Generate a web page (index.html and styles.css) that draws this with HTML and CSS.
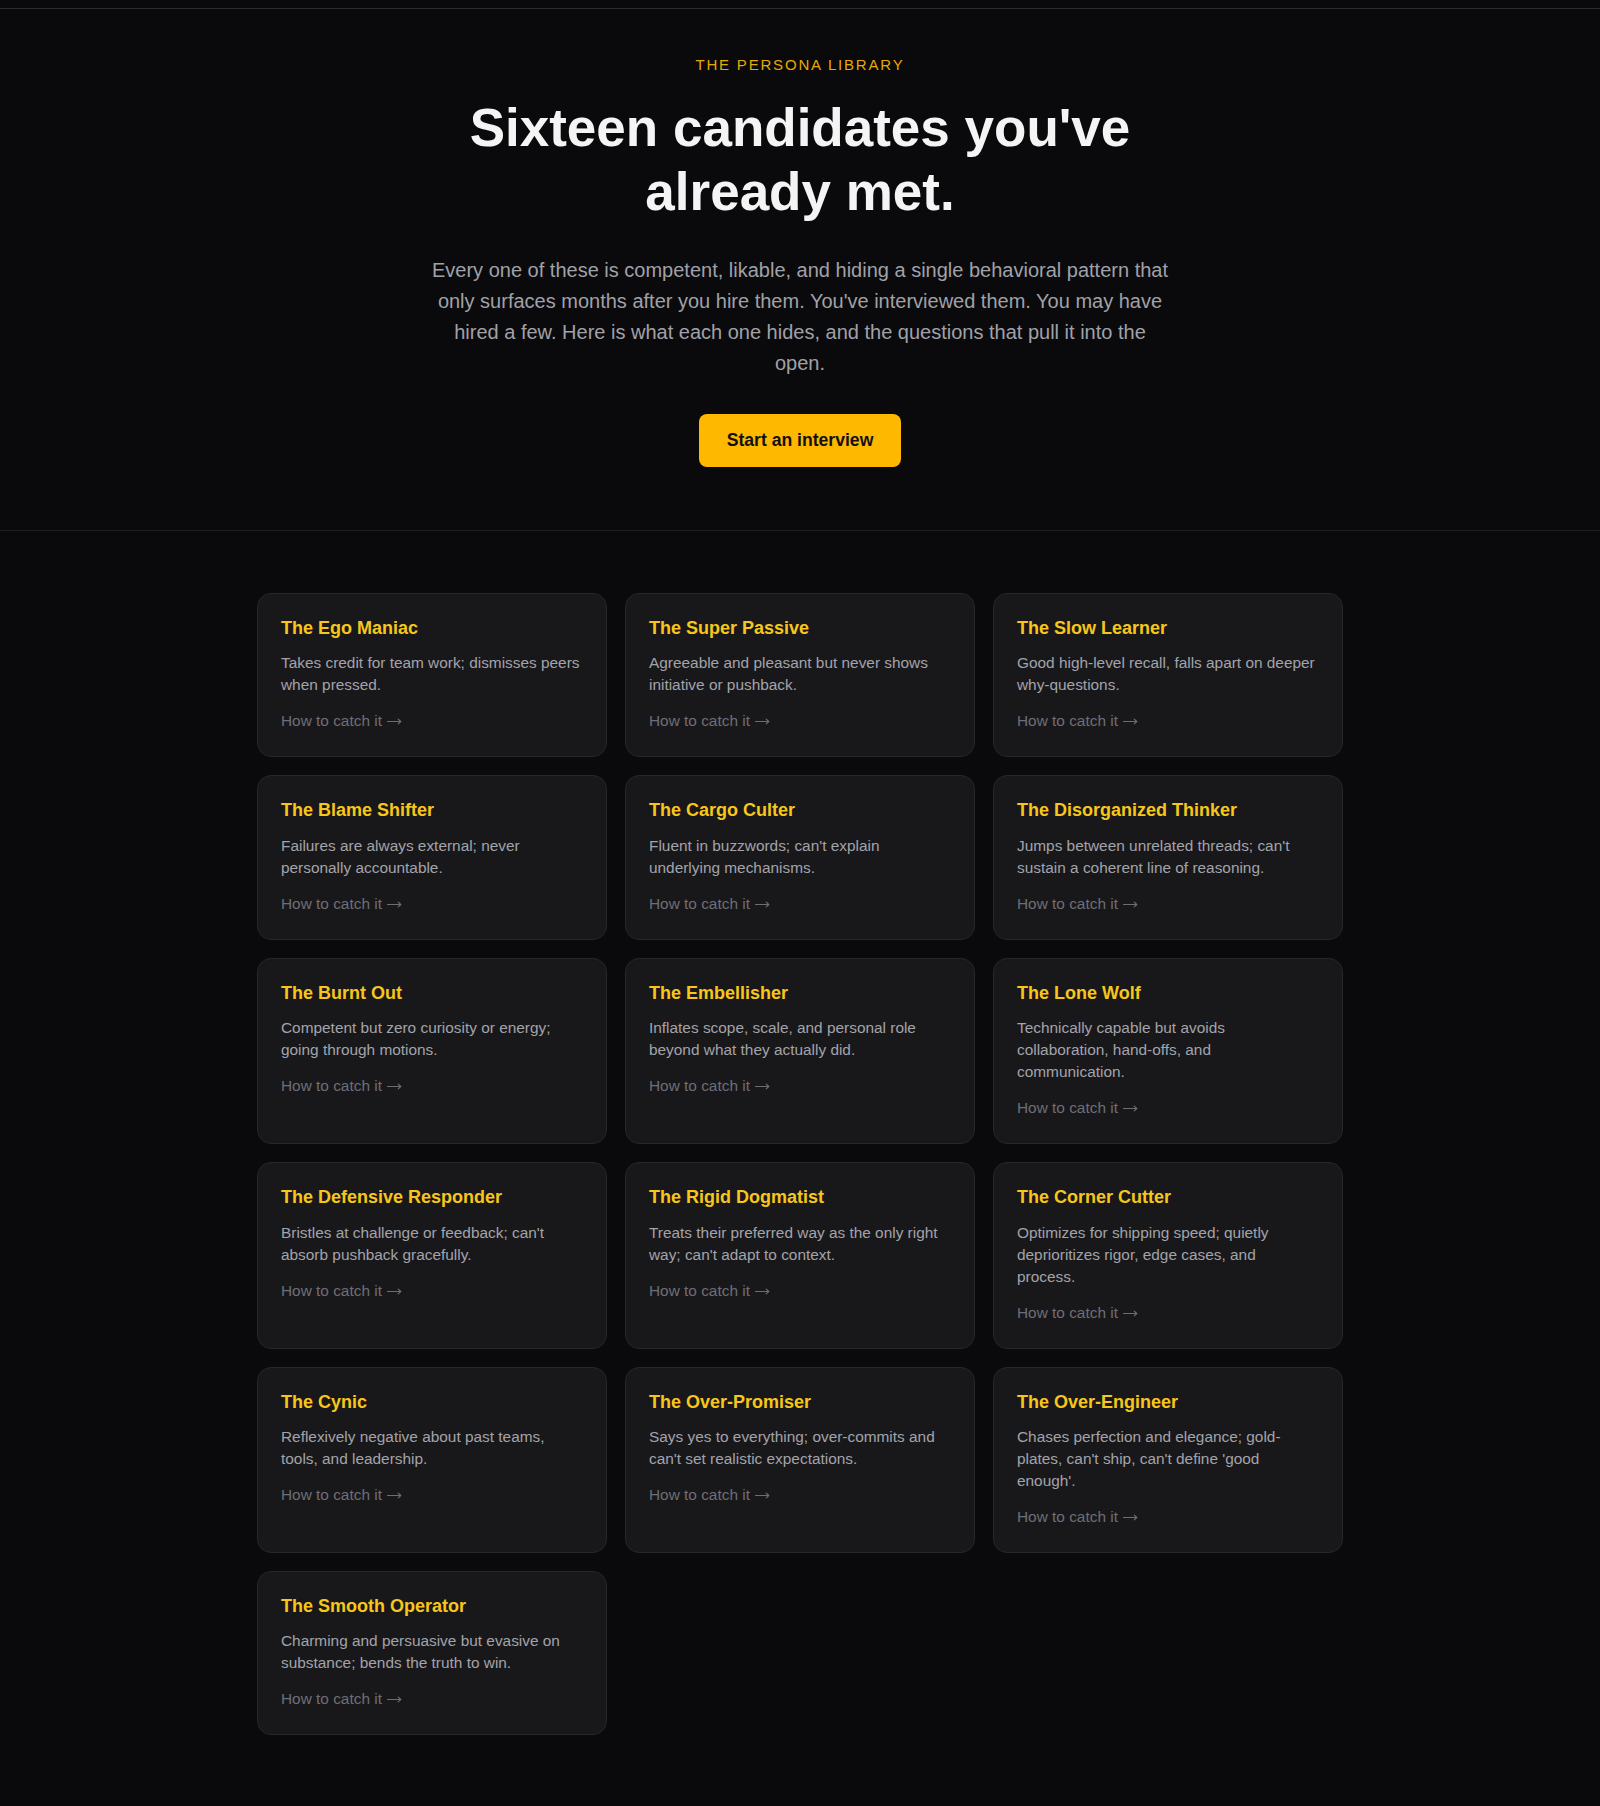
FILE: index.html
```html
<!DOCTYPE html>
<html lang="en">
<head>
<meta charset="utf-8">
<title>The Persona Library</title>
<link rel="stylesheet" href="styles.css">
</head>
<body>
<div class="topbar"></div>
<header class="hero">
  <p class="eyebrow">THE PERSONA LIBRARY</p>
  <h1 class="hero-title">Sixteen candidates you've already met.</h1>
  <p class="hero-lead">Every one of these is competent, likable, and hiding a single behavioral pattern that only surfaces months after you hire them. You've interviewed them. You may have hired a few. Here is what each one hides, and the questions that pull it into the open.</p>
  <a class="btn" href="#">Start an interview</a>
</header>
<main class="library">
  <div class="grid">
    <article class="card"><h2 class="card-title">The Ego Maniac</h2><p class="card-desc">Takes credit for team work; dismisses peers when pressed.</p><a class="card-link" href="#">How to catch it <svg class="arrow" viewBox="0 0 15 10" aria-hidden="true"><path d="M0.5 5.5H13.8M11.2 3.2L13.8 5.5L11.2 7.8"/></svg></a></article>
    <article class="card"><h2 class="card-title">The Super Passive</h2><p class="card-desc">Agreeable and pleasant but never shows initiative or pushback.</p><a class="card-link" href="#">How to catch it <svg class="arrow" viewBox="0 0 15 10" aria-hidden="true"><path d="M0.5 5.5H13.8M11.2 3.2L13.8 5.5L11.2 7.8"/></svg></a></article>
    <article class="card"><h2 class="card-title">The Slow Learner</h2><p class="card-desc">Good high-level recall, falls apart on deeper why-questions.</p><a class="card-link" href="#">How to catch it <svg class="arrow" viewBox="0 0 15 10" aria-hidden="true"><path d="M0.5 5.5H13.8M11.2 3.2L13.8 5.5L11.2 7.8"/></svg></a></article>
    <article class="card"><h2 class="card-title">The Blame Shifter</h2><p class="card-desc">Failures are always external; never personally accountable.</p><a class="card-link" href="#">How to catch it <svg class="arrow" viewBox="0 0 15 10" aria-hidden="true"><path d="M0.5 5.5H13.8M11.2 3.2L13.8 5.5L11.2 7.8"/></svg></a></article>
    <article class="card"><h2 class="card-title">The Cargo Culter</h2><p class="card-desc">Fluent in buzzwords; can't explain underlying mechanisms.</p><a class="card-link" href="#">How to catch it <svg class="arrow" viewBox="0 0 15 10" aria-hidden="true"><path d="M0.5 5.5H13.8M11.2 3.2L13.8 5.5L11.2 7.8"/></svg></a></article>
    <article class="card"><h2 class="card-title">The Disorganized Thinker</h2><p class="card-desc">Jumps between unrelated threads; can't sustain a coherent line of reasoning.</p><a class="card-link" href="#">How to catch it <svg class="arrow" viewBox="0 0 15 10" aria-hidden="true"><path d="M0.5 5.5H13.8M11.2 3.2L13.8 5.5L11.2 7.8"/></svg></a></article>
    <article class="card"><h2 class="card-title">The Burnt Out</h2><p class="card-desc">Competent but zero curiosity or energy; going through motions.</p><a class="card-link" href="#">How to catch it <svg class="arrow" viewBox="0 0 15 10" aria-hidden="true"><path d="M0.5 5.5H13.8M11.2 3.2L13.8 5.5L11.2 7.8"/></svg></a></article>
    <article class="card"><h2 class="card-title">The Embellisher</h2><p class="card-desc">Inflates scope, scale, and personal role beyond what they actually did.</p><a class="card-link" href="#">How to catch it <svg class="arrow" viewBox="0 0 15 10" aria-hidden="true"><path d="M0.5 5.5H13.8M11.2 3.2L13.8 5.5L11.2 7.8"/></svg></a></article>
    <article class="card"><h2 class="card-title">The Lone Wolf</h2><p class="card-desc">Technically capable but avoids collaboration, hand-offs, and communication.</p><a class="card-link" href="#">How to catch it <svg class="arrow" viewBox="0 0 15 10" aria-hidden="true"><path d="M0.5 5.5H13.8M11.2 3.2L13.8 5.5L11.2 7.8"/></svg></a></article>
    <article class="card"><h2 class="card-title">The Defensive Responder</h2><p class="card-desc">Bristles at challenge or feedback; can't absorb pushback gracefully.</p><a class="card-link" href="#">How to catch it <svg class="arrow" viewBox="0 0 15 10" aria-hidden="true"><path d="M0.5 5.5H13.8M11.2 3.2L13.8 5.5L11.2 7.8"/></svg></a></article>
    <article class="card"><h2 class="card-title">The Rigid Dogmatist</h2><p class="card-desc">Treats their preferred way as the only right way; can't adapt to context.</p><a class="card-link" href="#">How to catch it <svg class="arrow" viewBox="0 0 15 10" aria-hidden="true"><path d="M0.5 5.5H13.8M11.2 3.2L13.8 5.5L11.2 7.8"/></svg></a></article>
    <article class="card"><h2 class="card-title">The Corner Cutter</h2><p class="card-desc">Optimizes for shipping speed; quietly deprioritizes rigor, edge cases, and process.</p><a class="card-link" href="#">How to catch it <svg class="arrow" viewBox="0 0 15 10" aria-hidden="true"><path d="M0.5 5.5H13.8M11.2 3.2L13.8 5.5L11.2 7.8"/></svg></a></article>
    <article class="card"><h2 class="card-title">The Cynic</h2><p class="card-desc">Reflexively negative about past teams, tools, and leadership.</p><a class="card-link" href="#">How to catch it <svg class="arrow" viewBox="0 0 15 10" aria-hidden="true"><path d="M0.5 5.5H13.8M11.2 3.2L13.8 5.5L11.2 7.8"/></svg></a></article>
    <article class="card"><h2 class="card-title">The Over-Promiser</h2><p class="card-desc">Says yes to everything; over-commits and can't set realistic expectations.</p><a class="card-link" href="#">How to catch it <svg class="arrow" viewBox="0 0 15 10" aria-hidden="true"><path d="M0.5 5.5H13.8M11.2 3.2L13.8 5.5L11.2 7.8"/></svg></a></article>
    <article class="card"><h2 class="card-title">The Over-Engineer</h2><p class="card-desc">Chases perfection and elegance; gold-plates, can't ship, can't define 'good enough'.</p><a class="card-link" href="#">How to catch it <svg class="arrow" viewBox="0 0 15 10" aria-hidden="true"><path d="M0.5 5.5H13.8M11.2 3.2L13.8 5.5L11.2 7.8"/></svg></a></article>
    <article class="card"><h2 class="card-title">The Smooth Operator</h2><p class="card-desc">Charming and persuasive but evasive on substance; bends the truth to win.</p><a class="card-link" href="#">How to catch it <svg class="arrow" viewBox="0 0 15 10" aria-hidden="true"><path d="M0.5 5.5H13.8M11.2 3.2L13.8 5.5L11.2 7.8"/></svg></a></article>
  </div>
</main>
</body>
</html>
```
FILE: styles.css
```css
* { box-sizing: border-box; }

html, body {
  margin: 0;
  padding: 0;
  background: #0a0a0c;
}

body {
  font-family: "Liberation Sans", Arial, sans-serif;
  color: #e4e4e7;
  min-height: 1806px;
}

.topbar {
  height: 9px;
  border-bottom: 1px solid #2c2c30;
}

.hero {
  display: flex;
  flex-direction: column;
  align-items: center;
  text-align: center;
  padding: 45px 24px 63px;
  border-bottom: 1px solid #1e1e22;
}

.eyebrow {
  margin: 0;
  font-size: 15px;
  line-height: 22px;
  letter-spacing: 0.12em;
  color: #e8a900;
}

.hero-title {
  margin: 20px 0 0;
  max-width: 760px;
  font-size: 53px;
  line-height: 64px;
  font-weight: 700;
  color: #f4f4f5;
}

.hero-lead {
  margin: 31px 0 0;
  max-width: 740px;
  font-size: 20px;
  line-height: 31px;
  color: #a1a1a8;
}

.btn {
  margin-top: 35px;
  display: inline-block;
  padding: 14px 28px;
  background: #ffb800;
  color: #111113;
  font-size: 17.6px;
  line-height: 25px;
  font-weight: 700;
  text-decoration: none;
  border-radius: 8px;
}

.library {
  padding: 62px 24px 72px;
}

.grid {
  max-width: 1086px;
  margin: 0 auto;
  display: grid;
  grid-template-columns: repeat(3, 1fr);
  gap: 18px;
}

.card {
  background: #18181b;
  border: 1px solid #26262b;
  border-radius: 14px;
  padding: 23px 24px 24px 23px;
}

.card-title {
  margin: 0 0 12px;
  font-size: 18px;
  line-height: 23.4px;
  font-weight: 700;
  color: #f7c61a;
}

.card-desc {
  margin: 0;
  font-size: 15.4px;
  line-height: 22px;
  color: #a3a3aa;
}

.card-link {
  display: block;
  margin-top: 14px;
  font-size: 15.4px;
  line-height: 22px;
  color: #6e6e76;
  text-decoration: none;
}

.arrow {
  display: inline-block;
  width: 15px;
  height: 10px;
  margin-left: 1px;
  vertical-align: 0;
  fill: none;
  stroke: currentColor;
  stroke-width: 1.1;
  stroke-linecap: round;
  stroke-linejoin: round;
}
```
